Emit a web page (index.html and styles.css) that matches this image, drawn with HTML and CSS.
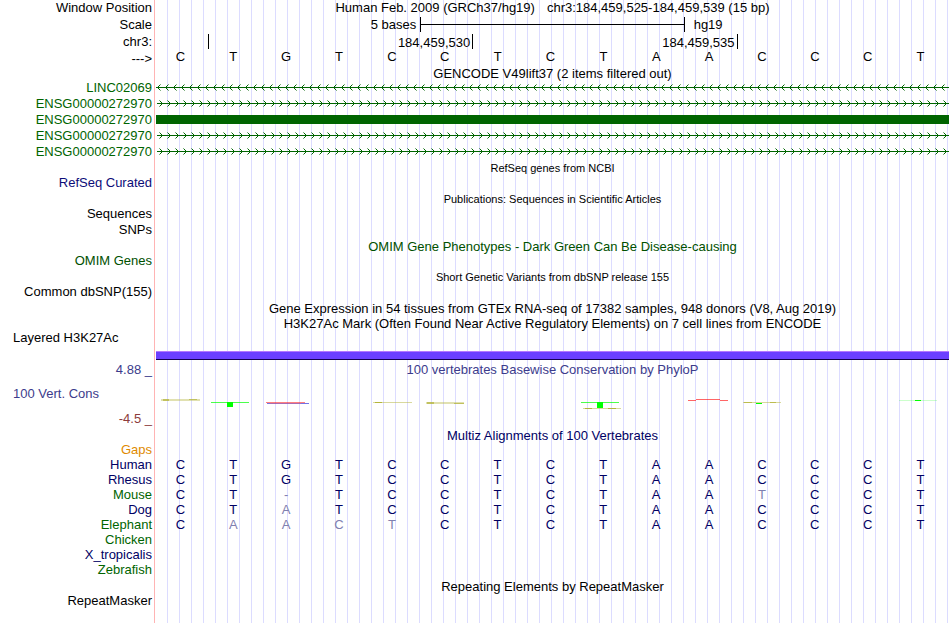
FILE: index.html
```html
<!DOCTYPE html>
<html lang="en">
<head>
    <meta charset="UTF-8">
    <meta name="viewport" content="width=device-width, initial-scale=1.0">
    <title>Human chr3:184,459,525-184,459,539</title>
    <link rel="stylesheet" href="styles.css">
</head>
<body>
<svg class="defs" aria-hidden="true">
    <defs>
        <pattern id="intron-left" width="8" height="16" patternUnits="userSpaceOnUse">
            <path d="M0 7h8v1h-8zM2 6h1v1h-1zM2 8h1v1h-1zM3 5h1v1h-1zM3 9h1v1h-1z" fill="#006400"/>
            <path d="M4 4h1v1h-1zM4 10h1v1h-1z" fill="#006400" opacity="0.5"/>
        </pattern>
        <pattern id="intron-right" width="8" height="16" patternUnits="userSpaceOnUse">
            <path d="M0 7h8v1h-8zM5 6h1v1h-1zM5 8h1v1h-1zM4 5h1v1h-1zM4 9h1v1h-1z" fill="#006400"/>
            <path d="M3 4h1v1h-1zM3 10h1v1h-1z" fill="#006400" opacity="0.5"/>
        </pattern>
    </defs>
</svg>
<main class="browser">
    <!-- position, scale and ruler -->
    <div class="row">
        <div class="label">Window Position</div>
        <h1 class="title position"><span>Human Feb. 2009 (GRCh37/hg19)</span><span>chr3:184,459,525-184,459,539 (15 bp)</span></h1>
    </div>
    <div class="row ruler-row">
        <div class="label">Scale</div>
        <div class="scale">
            <span class="scale-size">5 bases</span>
            <span class="scale-bar"></span>
            <span class="scale-db">hg19</span>
        </div>
    </div>
    <div class="row ruler-row">
        <div class="label">chr3:</div>
        <div class="ruler">
            <span class="tick"></span>
            <span class="tick wide">184,459,530</span>
            <span class="tick wide">184,459,535</span>
        </div>
    </div>
    <div class="sequence">
        <div class="label">---&gt;</div>
        <div class="bases">
            <span>C</span><span>T</span><span>G</span><span>T</span><span>C</span><span>C</span><span>T</span><span>C</span><span>T</span><span>A</span><span>A</span><span>C</span><span>C</span><span>C</span><span>T</span>
        </div>
    </div>

    <!-- genes -->
    <h2 class="title">GENCODE V49lift37 (2 items filtered out)</h2>
    <div class="row green">
        <div class="label">LINC02069</div>
        <svg class="gene"><rect width="100%" height="16" fill="url(#intron-left)"/></svg>
    </div>
    <div class="row green">
        <div class="label">ENSG00000272970</div>
        <svg class="gene"><rect x="1" width="100%" height="16" fill="url(#intron-right)"/></svg>
    </div>
    <div class="row green">
        <div class="label">ENSG00000272970</div>
        <div class="exon"></div>
    </div>
    <div class="row green">
        <div class="label">ENSG00000272970</div>
        <svg class="gene"><rect x="1" width="100%" height="16" fill="url(#intron-right)"/></svg>
    </div>
    <div class="row green">
        <div class="label">ENSG00000272970</div>
        <svg class="gene"><rect x="1" width="100%" height="16" fill="url(#intron-right)"/></svg>
    </div>

    <h2 class="title small">RefSeq genes from NCBI</h2>
    <div class="row refseq">
        <div class="label">RefSeq Curated</div>
    </div>
    <h2 class="title small">Publications: Sequences in Scientific Articles</h2>
    <div class="row">
        <div class="label">Sequences</div>
    </div>
    <div class="row">
        <div class="label">SNPs</div>
    </div>
    <h2 class="title omim">OMIM Gene Phenotypes - Dark Green Can Be Disease-causing</h2>
    <div class="row omim">
        <div class="label">OMIM Genes</div>
    </div>
    <h2 class="title small">Short Genetic Variants from dbSNP release 155</h2>
    <div class="row">
        <div class="label">Common dbSNP(155)</div>
    </div>

    <!-- expression and regulation -->
    <h2 class="title">Gene Expression in 54 tissues from GTEx RNA-seq of 17382 samples, 948 donors (V8, Aug 2019)</h2>
    <h2 class="title">H3K27Ac Mark (Often Found Near Active Regulatory Elements) on 7 cell lines from ENCODE</h2>
    <div class="row">
        <div class="label start">Layered H3K27Ac</div>
    </div>
    <div class="signal"></div>

    <!-- conservation -->
    <div class="row phylop">
        <div class="label">4.88 _</div>
        <h2 class="title">100 vertebrates Basewise Conservation by PhyloP</h2>
    </div>
    <div class="row conservation">
        <div class="wiggle-labels">
            <div class="label start">100 Vert. Cons</div>
            <div class="label min">-4.5 _</div>
        </div>
        <svg class="wiggle" viewBox="0 0 793 51" preserveAspectRatio="none">
            <g fill="#b4b43c">
                <path d="M5 22h39v2h-39z" opacity="0.4"/>
                <path d="M7 22h6v2h-6zM33 22h8v1h-8z" opacity="0.7"/>
                <path d="M217 25h39v1h-39z" opacity="0.5"/>
                <path d="M219 25h7v1h-7z"/>
                <path d="M270 25h38v2h-38z" opacity="0.4"/>
                <path d="M271 25h7v2h-7zM298 26h10v1h-10z" opacity="0.7"/>
                <path d="M427 31h38v1h-38z" opacity="0.5"/>
                <path d="M429 31h7v1h-7zM452 31h8v1h-8z"/>
                <path d="M587 25h38v1h-38z" opacity="0.5"/>
                <path d="M588 25h8v1h-8zM614 25h6v1h-6z" opacity="0.8"/>
            </g>
            <g fill="#00ff00">
                <path d="M55 25h38v1h-38zM425 25h38v1h-38z" opacity="0.7"/>
                <path d="M71 25h6v5h-6zM441 25h6v6h-6zM600 26h6v1h-6zM759 23h6v1h-6z"/>
                <path d="M743 23h38v1h-38z" opacity="0.2"/>
            </g>
            <g fill="#ff0000">
                <path d="M110 25h39v1h-39z" opacity="0.5"/>
                <path d="M532 23h8v1h-8zM564 23h8v1h-8z" opacity="0.6"/>
                <path d="M540 22h24v1h-24z" opacity="0.6"/>
            </g>
            <path d="M111 26h42v1h-42z" fill="#5050e0" opacity="0.8"/>
            <path d="M114 26h31v1h-31z" fill="#ff6060" opacity="0.4"/>
        </svg>
    </div>

    <h2 class="title multiz">Multiz Alignments of 100 Vertebrates</h2>
    <table class="alignment">
        <tr class="gaps"><th scope="row">Gaps</th><td colspan="15"></td></tr>
        <tr><th scope="row">Human</th><td>C</td><td>T</td><td>G</td><td>T</td><td>C</td><td>C</td><td>T</td><td>C</td><td>T</td><td>A</td><td>A</td><td>C</td><td>C</td><td>C</td><td>T</td></tr>
        <tr><th scope="row">Rhesus</th><td>C</td><td>T</td><td>G</td><td>T</td><td>C</td><td>C</td><td>T</td><td>C</td><td>T</td><td>A</td><td>A</td><td>C</td><td>C</td><td>C</td><td>T</td></tr>
        <tr><th scope="row" class="green">Mouse</th><td>C</td><td>T</td><td class="diff">-</td><td>T</td><td>C</td><td>C</td><td>T</td><td>C</td><td>T</td><td>A</td><td>A</td><td class="diff">T</td><td>C</td><td>C</td><td>T</td></tr>
        <tr><th scope="row">Dog</th><td>C</td><td>T</td><td class="diff">A</td><td>T</td><td>C</td><td>C</td><td>T</td><td>C</td><td>T</td><td>A</td><td>A</td><td>C</td><td>C</td><td>C</td><td>T</td></tr>
        <tr><th scope="row" class="green">Elephant</th><td>C</td><td class="diff">A</td><td class="diff">A</td><td class="diff">C</td><td class="diff">T</td><td>C</td><td>T</td><td>C</td><td>T</td><td>A</td><td>A</td><td>C</td><td>C</td><td>C</td><td>T</td></tr>
        <tr><th scope="row" class="green">Chicken</th><td colspan="15"></td></tr>
        <tr><th scope="row">X_tropicalis</th><td colspan="15"></td></tr>
        <tr><th scope="row" class="green">Zebrafish</th><td colspan="15"></td></tr>
    </table>

    <h2 class="title">Repeating Elements by RepeatMasker</h2>
    <div class="row">
        <div class="label">RepeatMasker</div>
    </div>
</main>
</body>
</html>
```
FILE: styles.css
```css
* {
    box-sizing: border-box;
}

body {
    margin: 0;
    background: #fff;
    color: #000;
    font-family: "Liberation Sans", Arial, Helvetica, sans-serif;
    font-size: 13px;
    line-height: 15px;
}

.defs {
    position: absolute;
    width: 0;
    height: 0;
}

/* label column, red divider, then a guide line every 12px */
.browser {
    min-height: 100vh;
    padding-right: 1px;
    background:
        linear-gradient(to right, #fff 154px, #ffb4b4 154px, #ffb4b4 155px, #fff 155px) 0 0 / 156px 100% no-repeat,
        linear-gradient(to right, #dcdcff 1px, transparent 1px) 167px 0 / 12px 100%;
}

.row {
    display: grid;
    grid-template-columns: 156px 1fr;
    height: 16px;
    line-height: 16px;
}

.label {
    padding-right: 4px;
    text-align: right;
    white-space: nowrap;
}

.label.start {
    padding-left: 13px;
    text-align: left;
}

.title {
    height: 15px;
    margin: 0;
    padding-left: 156px;
    font-size: 13px;
    font-weight: normal;
    line-height: 17px;
    text-align: center;
    white-space: nowrap;
}

.row .title {
    padding-left: 0;
}

.title.small {
    font-size: 11px;
}

.title.position {
    display: flex;
    justify-content: center;
    gap: 12px;
    line-height: 15px;
}

/* scale and ruler */
.ruler-row {
    height: 17px;
    line-height: 18px;
}

.scale {
    display: grid;
    grid-template-columns: repeat(3, 1fr);
    line-height: 17px;
}

.scale-size {
    padding-right: 4px;
    text-align: right;
}

.scale-bar {
    height: 15px;
    margin-top: 1px;
    border: solid #000;
    border-width: 0 1px;
    background: linear-gradient(#000, #000) 0 7px / 100% 1px no-repeat;
}

.scale-db {
    padding-left: 9px;
}

.ruler {
    display: grid;
    grid-template-columns: repeat(15, 1fr);
}

.tick {
    height: 15px;
    margin-top: 1px;
    padding-right: 2px;
    border-right: 1px solid #000;
    line-height: 17px;
    text-align: right;
}

.tick.wide {
    grid-column: span 5;
}

.sequence {
    display: grid;
    grid-template-columns: 154px 1fr;
    height: 15px;
    padding-right: 2px;
    line-height: 17px;
}

.sequence .label {
    padding-right: 2px;
}

.bases {
    display: grid;
    grid-template-columns: repeat(15, 1fr);
    line-height: 14px;
    text-align: center;
}

/* tracks */
.green {
    color: #006400;
}

.refseq {
    color: #0c0c78;
}

.omim {
    color: #005000;
}

.multiz {
    color: #000064;
    line-height: 15px;
}

.gene {
    display: block;
    width: 100%;
    height: 16px;
    shape-rendering: crispEdges;
}

.exon {
    height: 9px;
    margin-top: 3px;
    background: #006400;
}

.signal {
    height: 9px;
    margin: 5px 0 1px 156px;
    border-top: 1px solid #b478ff;
    border-bottom: 1px solid #140050;
    background: #6b3fff;
}

.phylop {
    color: #3c3c8c;
    line-height: 17px;
}

.conservation {
    height: 51px;
    color: #3c3c8c;
}

.wiggle-labels {
    display: flex;
    flex-direction: column;
    justify-content: space-between;
    padding: 9px 0 1px;
}

.label.min {
    color: #8c3c3c;
}

.wiggle {
    display: block;
    width: 100%;
    height: 51px;
}

.alignment {
    width: calc(100% - 2px);
    border-collapse: collapse;
    table-layout: fixed;
    color: #000064;
}

.alignment th,
.alignment td {
    height: 15px;
    padding: 0;
    font-weight: normal;
    line-height: 13px;
    text-align: center;
    vertical-align: top;
}

.alignment th {
    width: 154px;
    padding-right: 2px;
    text-align: right;
}

.alignment .green {
    color: #006400;
}

.alignment .diff {
    color: #8080b0;
}

.alignment .gaps {
    color: #e08a00;
}
```
